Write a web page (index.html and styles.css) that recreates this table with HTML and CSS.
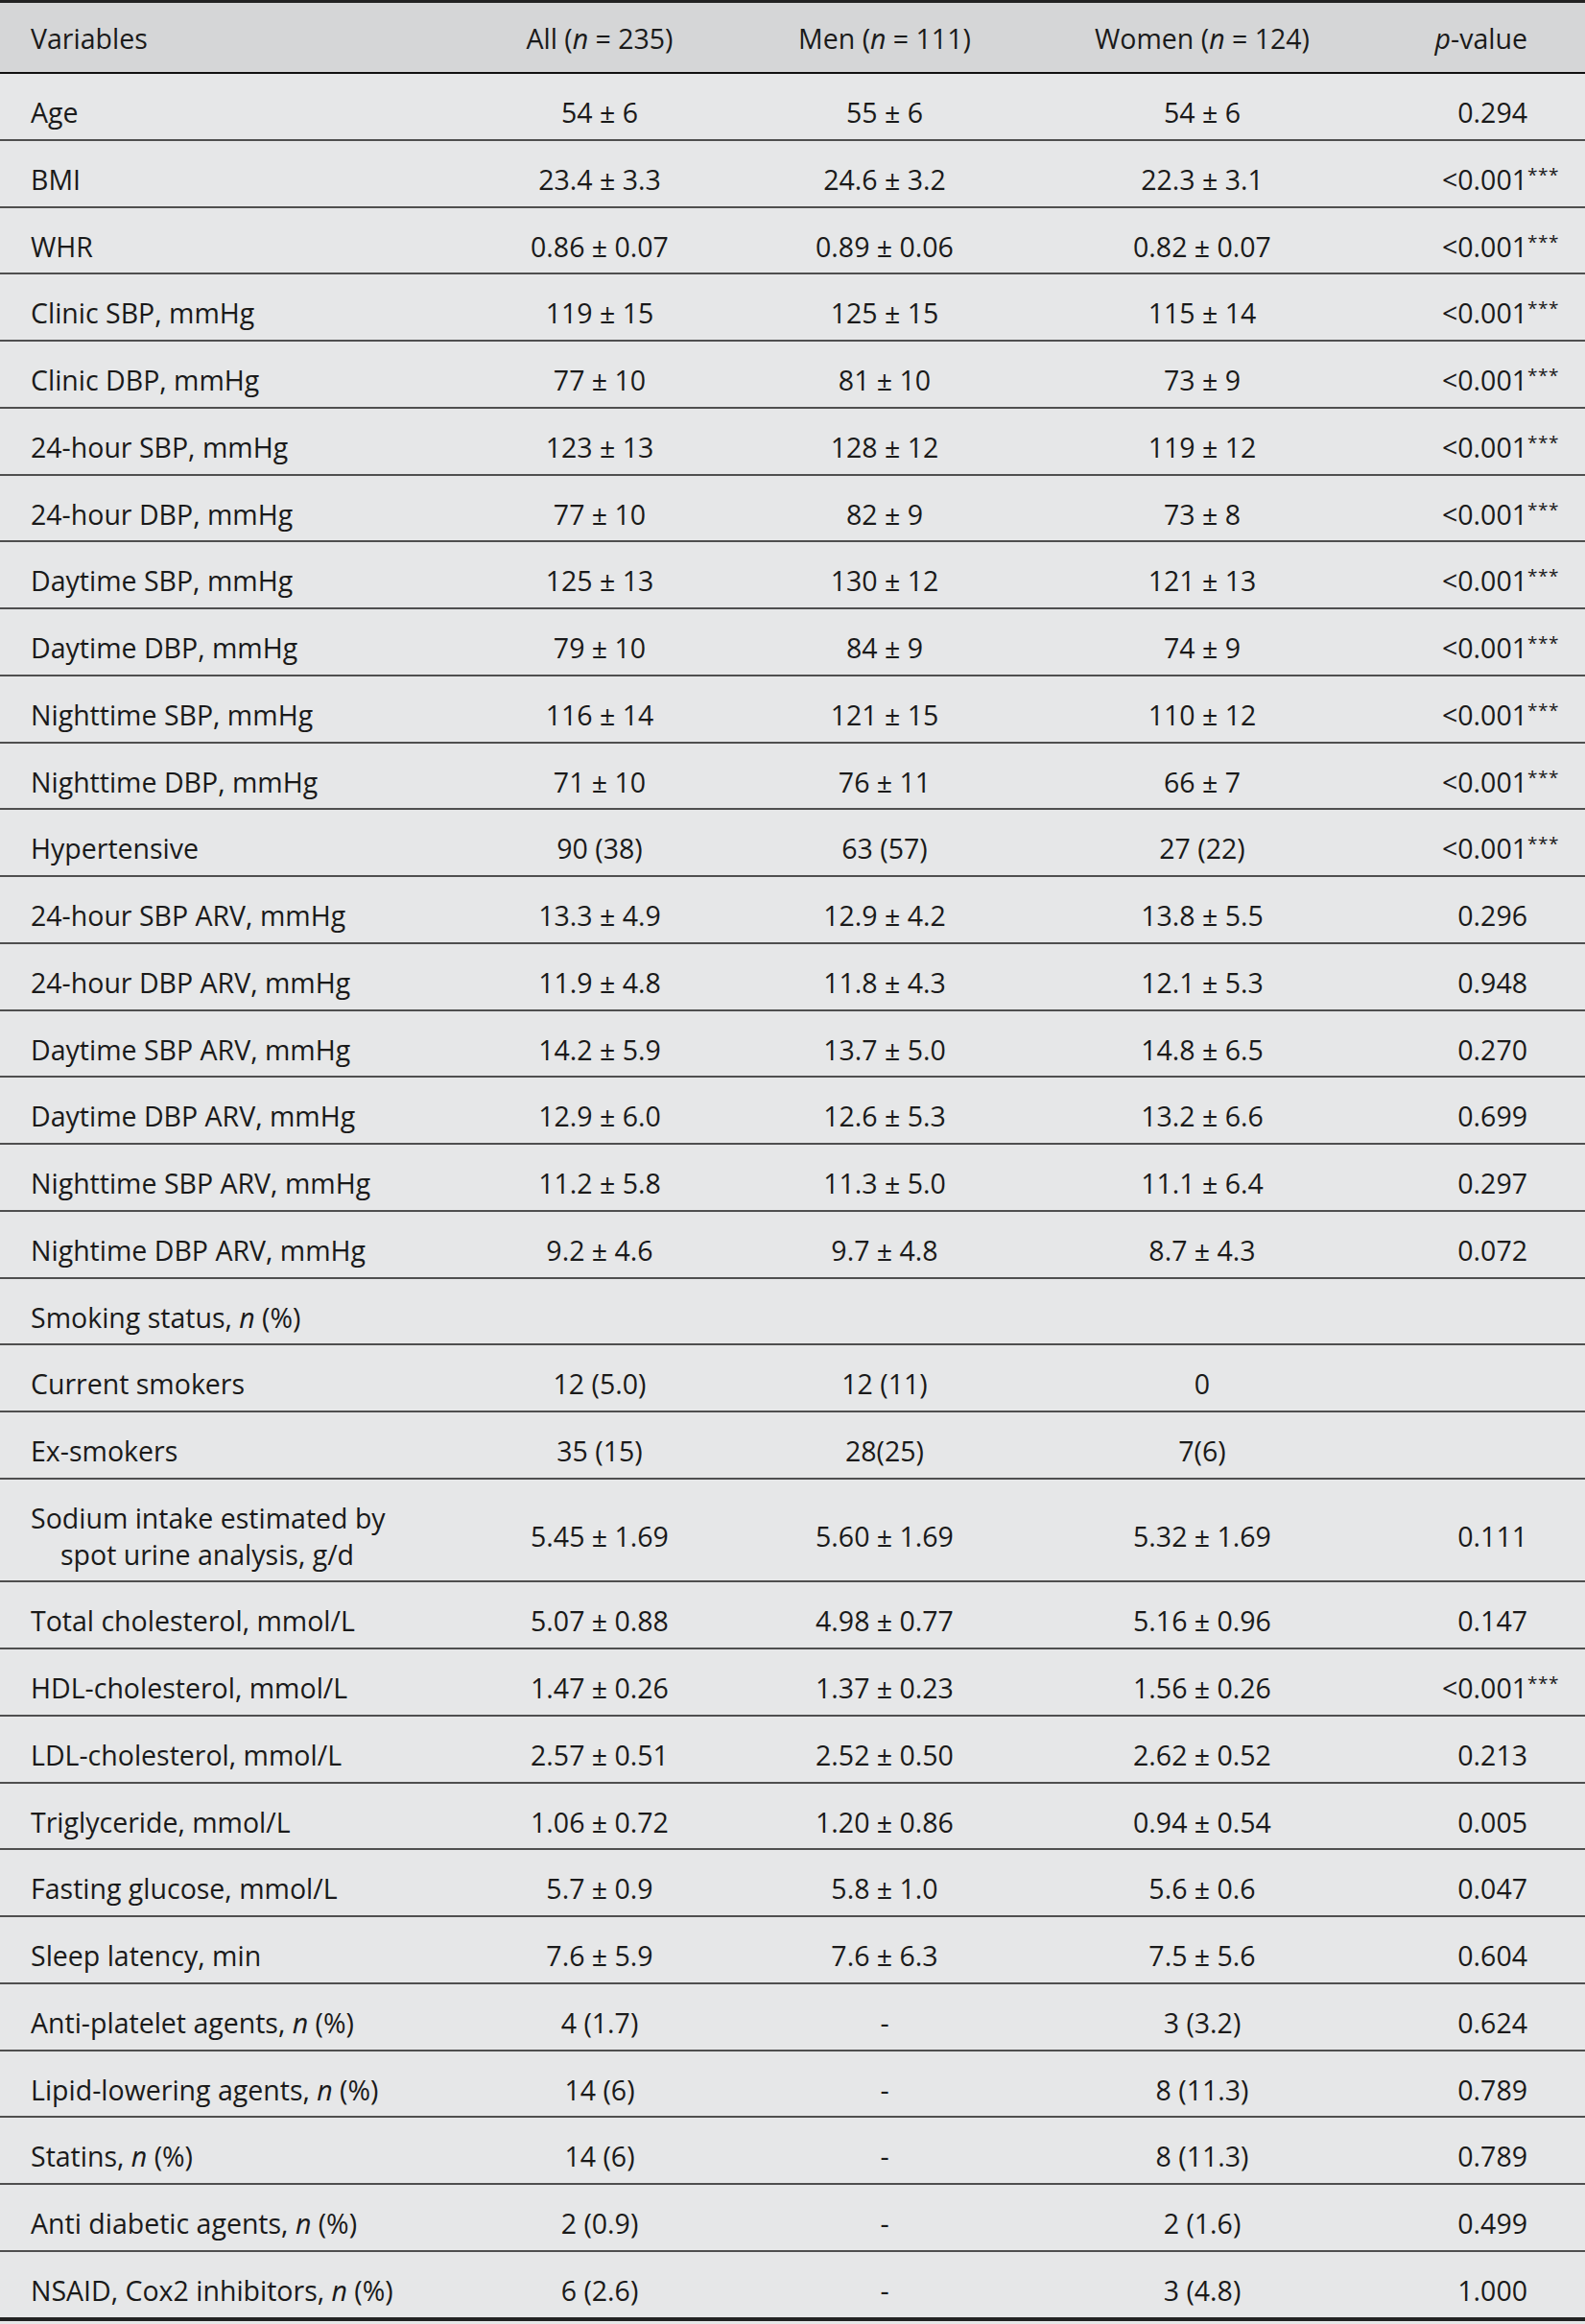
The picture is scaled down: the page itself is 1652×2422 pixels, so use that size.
FILE: index.html
```html
<!DOCTYPE html>
<html lang="en">
<head>
    <meta charset="UTF-8">
    <meta name="viewport" content="width=device-width, initial-scale=1.0">
    <title>Baseline characteristics</title>
    <link rel="stylesheet" href="styles.css">
</head>
<body>

<table class="stats">
    <colgroup>
        <col class="c-var">
        <col class="c-all">
        <col class="c-men">
        <col class="c-women">
        <col class="c-p">
    </colgroup>
    <thead>
        <tr>
            <th>Variables</th>
            <th>All (<i>n</i> = 235)</th>
            <th>Men (<i>n</i> = 111)</th>
            <th>Women (<i>n</i> = 124)</th>
            <th class="p"><i>p</i>-value</th>
        </tr>
    </thead>
    <tbody>
        <tr><td>Age</td><td>54 ± 6</td><td>55 ± 6</td><td>54 ± 6</td><td class="p">0.294</td></tr>
        <tr><td>BMI</td><td>23.4 ± 3.3</td><td>24.6 ± 3.2</td><td>22.3 ± 3.1</td><td class="p">&lt;0.001<span class="sig">***</span></td></tr>
        <tr><td>WHR</td><td>0.86 ± 0.07</td><td>0.89 ± 0.06</td><td>0.82 ± 0.07</td><td class="p">&lt;0.001<span class="sig">***</span></td></tr>
        <tr><td>Clinic SBP, mmHg</td><td>119 ± 15</td><td>125 ± 15</td><td>115 ± 14</td><td class="p">&lt;0.001<span class="sig">***</span></td></tr>
        <tr><td>Clinic DBP, mmHg</td><td>77 ± 10</td><td>81 ± 10</td><td>73 ± 9</td><td class="p">&lt;0.001<span class="sig">***</span></td></tr>
        <tr><td>24-hour SBP, mmHg</td><td>123 ± 13</td><td>128 ± 12</td><td>119 ± 12</td><td class="p">&lt;0.001<span class="sig">***</span></td></tr>
        <tr><td>24-hour DBP, mmHg</td><td>77 ± 10</td><td>82 ± 9</td><td>73 ± 8</td><td class="p">&lt;0.001<span class="sig">***</span></td></tr>
        <tr><td>Daytime SBP, mmHg</td><td>125 ± 13</td><td>130 ± 12</td><td>121 ± 13</td><td class="p">&lt;0.001<span class="sig">***</span></td></tr>
        <tr><td>Daytime DBP, mmHg</td><td>79 ± 10</td><td>84 ± 9</td><td>74 ± 9</td><td class="p">&lt;0.001<span class="sig">***</span></td></tr>
        <tr><td>Nighttime SBP, mmHg</td><td>116 ± 14</td><td>121 ± 15</td><td>110 ± 12</td><td class="p">&lt;0.001<span class="sig">***</span></td></tr>
        <tr><td>Nighttime DBP, mmHg</td><td>71 ± 10</td><td>76 ± 11</td><td>66 ± 7</td><td class="p">&lt;0.001<span class="sig">***</span></td></tr>
        <tr><td>Hypertensive</td><td>90 (38)</td><td>63 (57)</td><td>27 (22)</td><td class="p">&lt;0.001<span class="sig">***</span></td></tr>
        <tr><td>24-hour SBP ARV, mmHg</td><td>13.3 ± 4.9</td><td>12.9 ± 4.2</td><td>13.8 ± 5.5</td><td class="p">0.296</td></tr>
        <tr><td>24-hour DBP ARV, mmHg</td><td>11.9 ± 4.8</td><td>11.8 ± 4.3</td><td>12.1 ± 5.3</td><td class="p">0.948</td></tr>
        <tr><td>Daytime SBP ARV, mmHg</td><td>14.2 ± 5.9</td><td>13.7 ± 5.0</td><td>14.8 ± 6.5</td><td class="p">0.270</td></tr>
        <tr><td>Daytime DBP ARV, mmHg</td><td>12.9 ± 6.0</td><td>12.6 ± 5.3</td><td>13.2 ± 6.6</td><td class="p">0.699</td></tr>
        <tr><td>Nighttime SBP ARV, mmHg</td><td>11.2 ± 5.8</td><td>11.3 ± 5.0</td><td>11.1 ± 6.4</td><td class="p">0.297</td></tr>
        <tr><td>Nightime DBP ARV, mmHg</td><td>9.2 ± 4.6</td><td>9.7 ± 4.8</td><td>8.7 ± 4.3</td><td class="p">0.072</td></tr>
        <tr><td>Smoking status, <i>n</i> (%)</td><td></td><td></td><td></td><td class="p"></td></tr>
        <tr><td>Current smokers</td><td>12 (5.0)</td><td>12 (11)</td><td>0</td><td class="p"></td></tr>
        <tr><td>Ex-smokers</td><td>35 (15)</td><td>28(25)</td><td>7(6)</td><td class="p"></td></tr>
        <tr><td class="wrap">Sodium intake estimated by<br>spot urine analysis, g/d</td><td>5.45 ± 1.69</td><td>5.60 ± 1.69</td><td>5.32 ± 1.69</td><td class="p">0.111</td></tr>
        <tr><td>Total cholesterol, mmol/L</td><td>5.07 ± 0.88</td><td>4.98 ± 0.77</td><td>5.16 ± 0.96</td><td class="p">0.147</td></tr>
        <tr><td>HDL-cholesterol, mmol/L</td><td>1.47 ± 0.26</td><td>1.37 ± 0.23</td><td>1.56 ± 0.26</td><td class="p">&lt;0.001<span class="sig">***</span></td></tr>
        <tr><td>LDL-cholesterol, mmol/L</td><td>2.57 ± 0.51</td><td>2.52 ± 0.50</td><td>2.62 ± 0.52</td><td class="p">0.213</td></tr>
        <tr><td>Triglyceride, mmol/L</td><td>1.06 ± 0.72</td><td>1.20 ± 0.86</td><td>0.94 ± 0.54</td><td class="p">0.005</td></tr>
        <tr><td>Fasting glucose, mmol/L</td><td>5.7 ± 0.9</td><td>5.8 ± 1.0</td><td>5.6 ± 0.6</td><td class="p">0.047</td></tr>
        <tr><td>Sleep latency, min</td><td>7.6 ± 5.9</td><td>7.6 ± 6.3</td><td>7.5 ± 5.6</td><td class="p">0.604</td></tr>
        <tr><td>Anti-platelet agents, <i>n</i> (%)</td><td>4 (1.7)</td><td>-</td><td>3 (3.2)</td><td class="p">0.624</td></tr>
        <tr><td>Lipid-lowering agents, <i>n</i> (%)</td><td>14 (6)</td><td>-</td><td>8 (11.3)</td><td class="p">0.789</td></tr>
        <tr><td>Statins, <i>n</i> (%)</td><td>14 (6)</td><td>-</td><td>8 (11.3)</td><td class="p">0.789</td></tr>
        <tr><td>Anti diabetic agents, <i>n</i> (%)</td><td>2 (0.9)</td><td>-</td><td>2 (1.6)</td><td class="p">0.499</td></tr>
        <tr><td>NSAID, Cox2 inhibitors, <i>n</i> (%)</td><td>6 (2.6)</td><td>-</td><td>3 (4.8)</td><td class="p">1.000</td></tr>
    </tbody>
</table>

</body>
</html>
```

FILE: styles.css
```css
body {
    margin: 0;
    background-color: #e6e7e8;
    font-family: "Open Sans", "Noto Sans", sans-serif;
    font-size: 28.5px;
    color: #1a1a1a;
}

.stats {
    width: 1652px;
    table-layout: fixed;
    border-collapse: separate;
    border-spacing: 0;
    line-height: 37.75px;
}

.c-var { width: 480px; }
.c-all { width: 290px; }
.c-men { width: 304px; }
.c-women { width: 358px; }
.c-p { width: 220px; }

.stats th,
.stats td {
    text-align: center;
    white-space: nowrap;
    padding: 22px 0 8px;
    border-bottom: 2px solid #4f4f4f;
}

.stats th {
    font-weight: normal;
    background-color: #d5d6d7;
    border-top: 3px solid #222;
    border-bottom-color: #111;
    padding: 19px 0 15.25px;
}

.stats th:first-child,
.stats td:first-child {
    text-align: left;
    padding-left: 32px;
}

.stats .p {
    text-align: right;
    padding-right: 60px;
}

.stats td.wrap {
    padding-left: 63px;
    text-indent: -31px;
}

.stats tbody tr:last-child td {
    border-bottom: 4px solid #222;
}

.sig {
    display: inline-block;
    width: 0;
    font-size: 19px;
    vertical-align: 9px;
    line-height: 1;
    letter-spacing: 0.5px;
}
```
